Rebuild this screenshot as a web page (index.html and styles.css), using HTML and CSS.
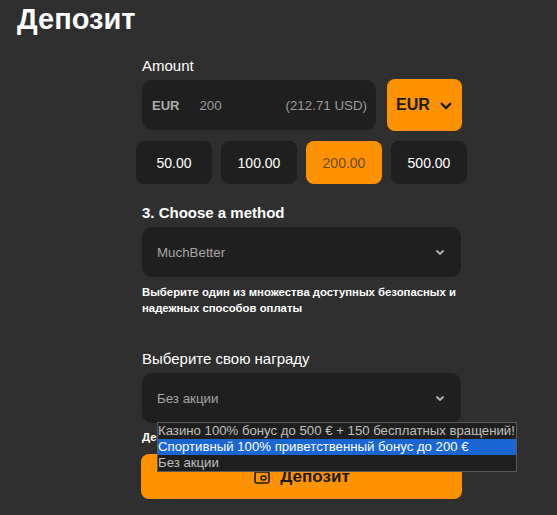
FILE: index.html
```html
<!doctype html>
<html lang="ru">
<head>
    <meta charset="utf-8">
    <title>Депозит</title>
    <link rel="stylesheet" href="styles.css">
</head>
<body>
    <h1>Депозит</h1>
    <form class="deposit">
        <div class="label amount-label">Amount</div>
        <div class="amount-row">
            <div class="amount-box">
                <span class="cur">EUR</span>
                <span class="val">200</span>
                <span class="conv">(212.71 USD)</span>
            </div>
            <button type="button" class="cur-btn">EUR
                <svg width="14" height="9" viewBox="0 0 14 9"><path d="M2 2l5 5 5-5" fill="none" stroke="#1a1a1a" stroke-width="2.4"/></svg>
            </button>
        </div>
        <div class="chips">
            <button type="button" class="chip">50.00</button>
            <button type="button" class="chip">100.00</button>
            <button type="button" class="chip active">200.00</button>
            <button type="button" class="chip">500.00</button>
        </div>
        <div class="label method-label">3. Choose a method</div>
        <div class="select">
            <span>MuchBetter</span>
            <svg width="10" height="7" viewBox="0 0 10 7"><path d="M1.5 1.5L5 5l3.5-3.5" fill="none" stroke="#b5b5b5" stroke-width="1.8"/></svg>
        </div>
        <p class="hint">Выберите один из множества доступных безопасных и надежных способов оплаты</p>
        <div class="label bonus-label">Выберите свою награду</div>
        <div class="bonus-wrap">
            <div class="select">
                <span>Без акции</span>
                <svg width="10" height="7" viewBox="0 0 10 7"><path d="M1.5 1.5L5 5l3.5-3.5" fill="none" stroke="#b5b5b5" stroke-width="1.8"/></svg>
            </div>
            <ul class="dropdown">
                <li>Казино 100% бонус до 500 € + 150 бесплатных вращений!</li>
                <li class="selected">Спортивный 100% приветственный бонус до 200 €</li>
                <li>Без акции</li>
            </ul>
        </div>
        <p class="hint bonus-hint">Депозит</p>
        <button type="button" class="submit">
            <svg width="18" height="18" viewBox="0 0 18 18"><rect x="2" y="4" width="14" height="11" rx="2" fill="none" stroke="#1a1a1a" stroke-width="1.6"/><rect x="8" y="8" width="5" height="4" rx="2" fill="none" stroke="#1a1a1a" stroke-width="1.4"/></svg>
            Депозит
        </button>
    </form>
</body>
</html>
```

FILE: styles.css
```css
* {
    box-sizing: border-box;
}
html, body {
    height: 100%;
    overflow: hidden;
}
body {
    margin: 0;
    background-color: #2f2f2f;
    color: #fff;
    font-family: "Liberation Sans", Arial, sans-serif;
}
h1 {
    margin: 0;
    padding: 2px 0 0 17px;
    font-size: 29px;
    line-height: 34px;
}
button {
    font-family: inherit;
    border: none;
    cursor: pointer;
}
.deposit {
    width: 320px;
    margin: 21px 0 0 142px;
}
.label {
    font-size: 15px;
    line-height: 18px;
}
.amount-row {
    display: flex;
    justify-content: space-between;
    align-items: center;
    margin-top: 4px;
}
.amount-box {
    width: 234px;
    height: 50px;
    display: flex;
    align-items: center;
    padding: 0 9px 0 10px;
    background-color: #1f1f1f;
    border-radius: 10px;
    color: #9c9c9c;
    font-size: 13.33px;
}
.cur {
    font-size: 13px;
    font-weight: bold;
    color: #adadad;
}
.val {
    margin-left: 20px;
}
.conv {
    margin-left: auto;
}
.cur-btn {
    width: 75px;
    height: 52px;
    display: flex;
    align-items: center;
    justify-content: center;
    gap: 9px;
    padding-top: 1px;
    background-color: #ff9200;
    border-radius: 8px;
    color: #1a1a1a;
    font-size: 16px;
    font-weight: bold;
}
.chips {
    display: flex;
    gap: 9px;
    margin: 10px -5px 0 -6px;
}
.chip {
    flex: 1;
    height: 43px;
    background-color: #1f1f1f;
    border-radius: 8px;
    color: #fff;
    font-size: 14px;
}
.chip.active {
    background-color: #ff9200;
    color: #6b4a1c;
}
.method-label {
    margin-top: 20px;
    font-weight: bold;
}
.select {
    height: 50px;
    display: flex;
    align-items: center;
    justify-content: space-between;
    margin-top: 5px;
    padding: 0 16px 0 15px;
    background-color: #1f1f1f;
    border-radius: 10px;
    color: #a6a6a6;
    font-size: 13.33px;
}
.method-label + .select {
    width: 319px;
}
.hint {
    margin: 7px 0 0;
    font-size: 11.33px;
    font-weight: bold;
    line-height: 16px;
}
.bonus-label {
    margin-top: 34px;
}
.bonus-wrap {
    position: relative;
    width: 319px;
}
.dropdown {
    position: absolute;
    top: 49px;
    left: 15px;
    width: 360px;
    margin: 0;
    padding: 0;
    list-style: none;
    background-color: #1f1f1f;
    border: 1px solid #5a5a5a;
    color: #c0c0c0;
    font-size: 13.2px;
    line-height: 16px;
    white-space: nowrap;
    z-index: 2;
}
.dropdown .selected {
    background-color: #1a66d2;
    color: #fff;
}
.bonus-hint {
    margin-top: 6px;
}
.submit {
    width: 321px;
    height: 45px;
    display: flex;
    align-items: center;
    justify-content: center;
    gap: 9px;
    margin: 9px 0 0 -1px;
    background-color: #ff9200;
    border-radius: 8px;
    color: #1a1a1a;
    font-size: 17px;
    font-weight: bold;
}
```
